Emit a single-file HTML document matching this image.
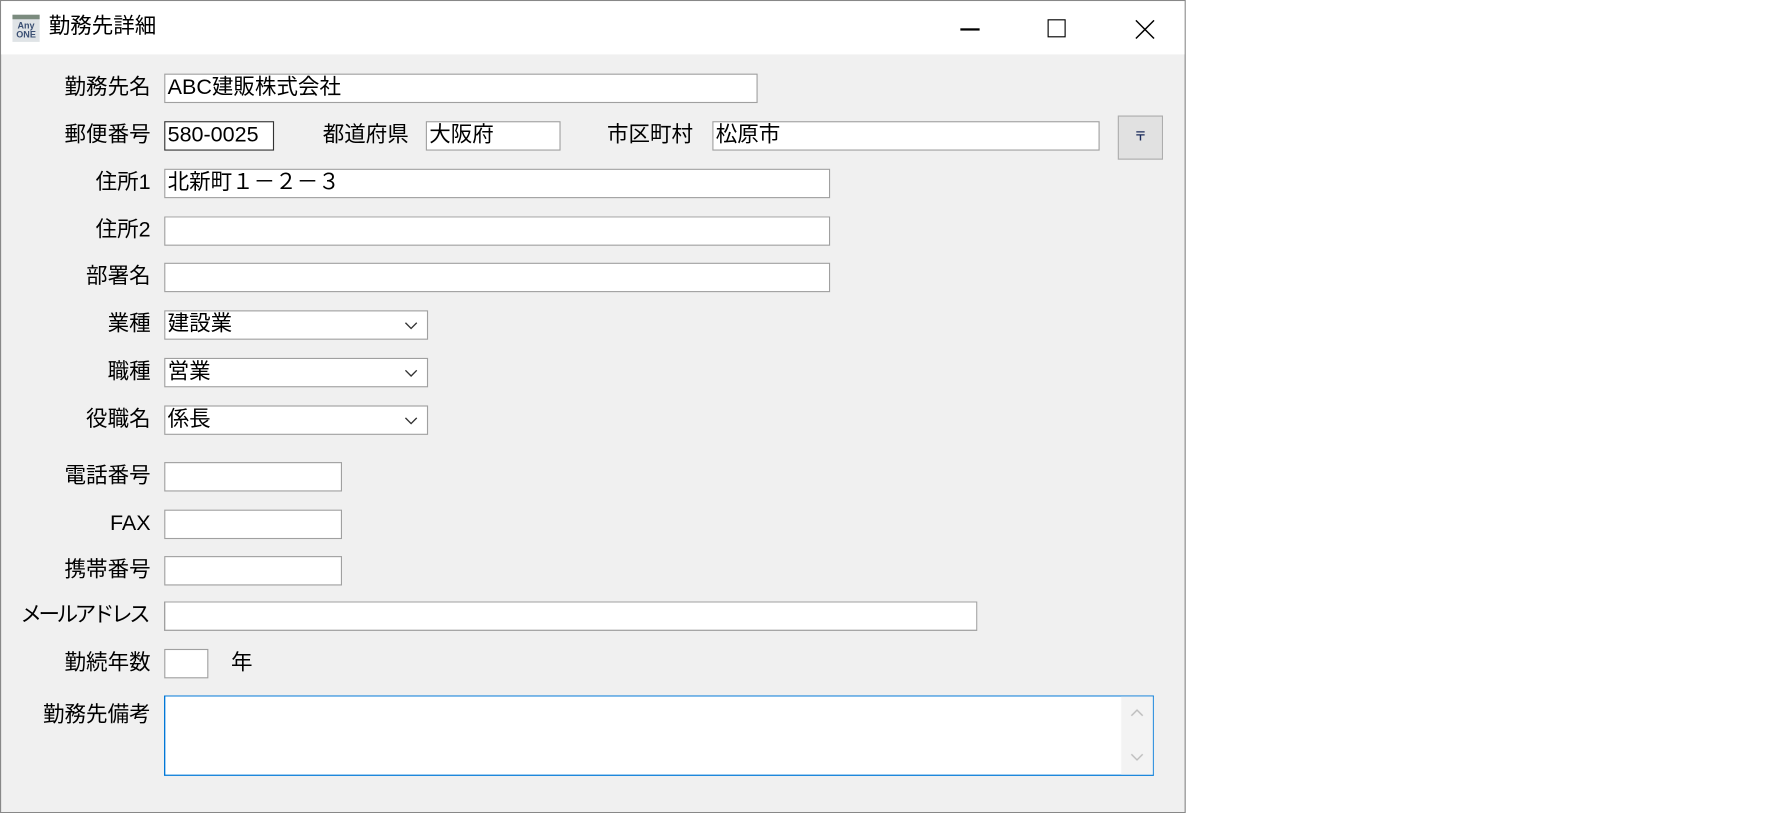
<!DOCTYPE html>
<html><head><meta charset="utf-8"><style>
html,body{margin:0;padding:0;background:#fff;width:1775px;height:813px;overflow:hidden}
#s{position:absolute;left:0;top:0;width:1560px;height:715px;transform:scale(1.1325);transform-origin:0 0;font-family:"Liberation Sans","Noto Sans CJK JP",sans-serif;color:#000}
.win{position:absolute;left:0;top:0;width:1047px;height:718px;border:1px solid #888;box-sizing:border-box;background:#f0f0f0}
.tb{position:absolute;left:0;top:0;right:0;height:47px;background:#fff}
.a{position:absolute}
.lb{position:absolute;font-size:19px;text-align:right;width:200px;line-height:26px}
.in{position:absolute;background:#fff;border:1px solid #a0a0a0;box-sizing:border-box;height:26px;font-size:19px;line-height:24px;padding-left:2px;white-space:nowrap}
.sel svg{position:absolute;right:8px;top:9px}
</style></head><body><div id="s">
<div class="win">
<div class="tb">
 <div class="a" style="left:10px;top:12px;width:24px;height:24px;background:#dfe3e6;border-top:4px solid #7b8b7e;box-sizing:border-box;font:bold 8px/8px 'Liberation Sans',sans-serif;color:#3a4f73;text-align:center;padding-top:2px">Any<br>ONE</div>
 <div class="a" style="left:42px;top:11px;font-size:19px;line-height:24px">勤務先詳細</div>
 <div class="a" style="left:847px;top:24px;width:17px;height:1.5px;background:#000"></div>
 <div class="a" style="left:924px;top:16px;width:16px;height:16px;border:1.5px solid #000;box-sizing:border-box"></div>
 <svg class="a" style="left:1001px;top:16px" width="18" height="18"><path d="M1 1L17 17M17 1L1 17" stroke="#000" stroke-width="1.3"/></svg>
</div>
<div class="lb" style="left:-68px;top:64px">勤務先名</div><div class="in" style="left:144px;top:64px;width:524px">ABC建販株式会社</div>
<div class="lb" style="left:-68px;top:106px">郵便番号</div><div class="in" style="left:144px;top:106px;width:97px;border-color:#333">580-0025</div>
<div class="lb" style="left:160px;top:106px">都道府県</div><div class="in" style="left:375px;top:106px;width:119px">大阪府</div>
<div class="lb" style="left:411px;top:106px">市区町村</div><div class="in" style="left:628px;top:106px;width:342px">松原市</div>
<div class="a" style="left:986px;top:101px;width:40px;height:39px;background:#e1e1e1;border:1px solid #adadad;box-sizing:border-box;font-size:11px;font-weight:bold;color:#1a2a5a;text-align:center;line-height:37px">〒</div>
<div class="lb" style="left:-68px;top:148px">住所1</div><div class="in" style="left:144px;top:148px;width:588px">北新町１－２－３</div>
<div class="lb" style="left:-68px;top:190px">住所2</div><div class="in" style="left:144px;top:190px;width:588px"></div>
<div class="lb" style="left:-68px;top:231px">部署名</div><div class="in" style="left:144px;top:231px;width:588px"></div>
<div class="lb" style="left:-68px;top:273px">業種</div><div class="in sel" style="left:144px;top:273px;width:233px">建設業<svg width="12" height="8"><path d="M1 1L6 6L11 1" fill="none" stroke="#333" stroke-width="1.2"/></svg></div>
<div class="lb" style="left:-68px;top:315px">職種</div><div class="in sel" style="left:144px;top:315px;width:233px">営業<svg width="12" height="8"><path d="M1 1L6 6L11 1" fill="none" stroke="#333" stroke-width="1.2"/></svg></div>
<div class="lb" style="left:-68px;top:357px">役職名</div><div class="in sel" style="left:144px;top:357px;width:233px">係長<svg width="12" height="8"><path d="M1 1L6 6L11 1" fill="none" stroke="#333" stroke-width="1.2"/></svg></div>
<div class="lb" style="left:-68px;top:407px">電話番号</div><div class="in" style="left:144px;top:407px;width:157px"></div>
<div class="lb" style="left:-68px;top:449px">FAX</div><div class="in" style="left:144px;top:449px;width:157px"></div>
<div class="lb" style="left:-68px;top:490px">携帯番号</div><div class="in" style="left:144px;top:490px;width:157px"></div>
<div class="lb" style="left:-68px;top:530px;letter-spacing:-3px;padding-right:3px;box-sizing:border-box">メールアドレス</div><div class="in" style="left:144px;top:530px;width:718px"></div>
<div class="lb" style="left:-68px;top:572px">勤続年数</div><div class="in" style="left:144px;top:572px;width:39px"></div>
<div class="a" style="left:203px;top:572px;font-size:19px;line-height:26px">年</div>
<div class="lb" style="left:-68px;top:618px">勤務先備考</div>
<div class="in" style="left:144px;top:613px;width:874px;height:71px;border-color:#0078d7">
 <div class="a" style="right:0;top:0;width:28px;height:69px;background:#f3f3f3"></div>
 <svg class="a" style="right:8px;top:10px" width="12" height="8"><path d="M1 7L6 2L11 7" fill="none" stroke="#bbb" stroke-width="1.2"/></svg>
 <svg class="a" style="right:8px;top:50px" width="12" height="8"><path d="M1 1L6 6L11 1" fill="none" stroke="#bbb" stroke-width="1.2"/></svg>
</div>
</div>
</div></body></html>
